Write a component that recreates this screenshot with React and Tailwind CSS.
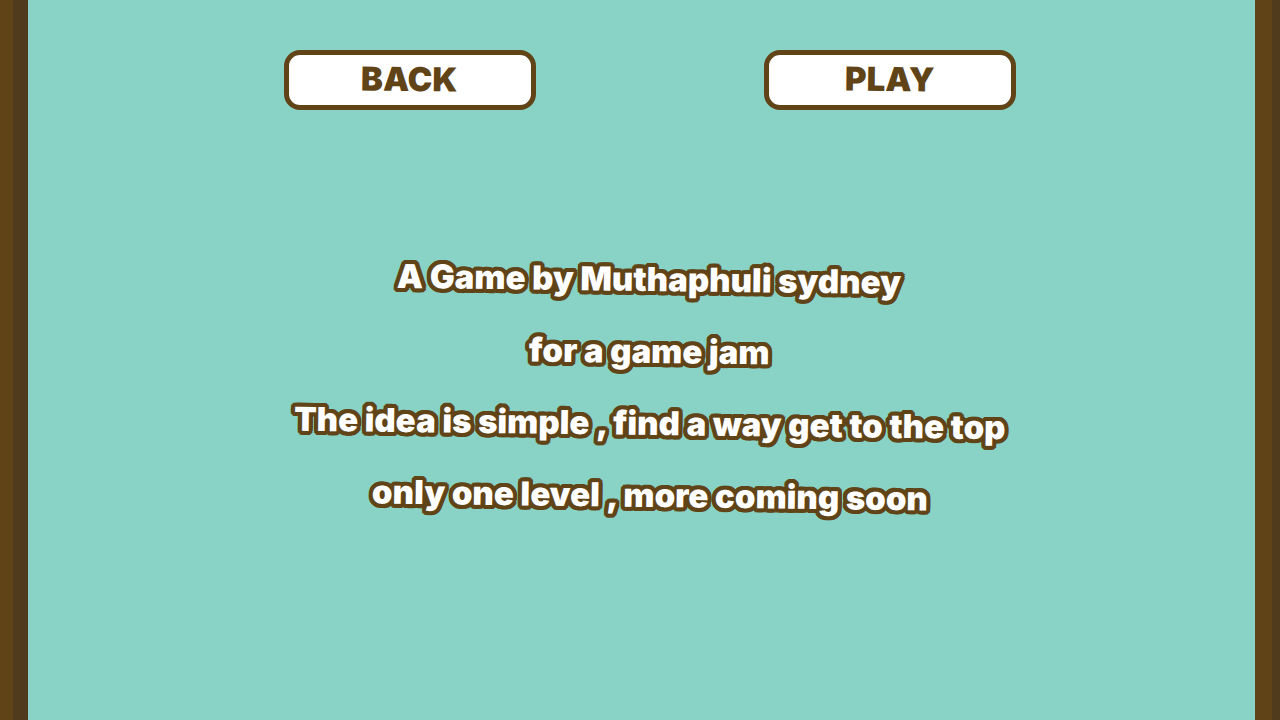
const lines = [
  'A Game by Muthaphuli sydney',
  'for a game jam',
  'The idea is simple , find a way get to the top',
  'only one level , more coming soon',
];

const outline =
  '[text-shadow:4px_0_#604417,4px_2px_#604417,3px_3px_#604417,2px_4px_#604417,0_4px_#604417,-2px_4px_#604417,-3px_3px_#604417,-4px_2px_#604417,-4px_0_#604417,-4px_-2px_#604417,-3px_-3px_#604417,-2px_-4px_#604417,0_-4px_#604417,2px_-4px_#604417,3px_-3px_#604417,4px_-2px_#604417]';

function MenuButton({ children }) {
  return (
    <button
      type="button"
      className="flex h-15 w-63 items-center justify-center rounded-2xl border-[5px] border-[#604417] bg-white pb-0.5 text-[33px] leading-9 text-[#604417]"
    >
      <span className="rotate-[0.7deg]">{children}</span>
    </button>
  );
}

export default function App() {
  return (
    <div className="flex min-h-screen bg-[#88d3c5] font-['Inter',sans-serif] font-black">
      <div className="w-[13px] shrink-0 bg-[#604417]" />
      <div className="w-[15px] shrink-0 bg-[#503c1c]" />
      <main className="flex flex-1 flex-col items-center pt-[50px] pl-4">
        <nav className="flex gap-57">
          <MenuButton>BACK</MenuButton>
          <MenuButton>PLAY</MenuButton>
        </nav>
        <div className="mt-[133px] flex flex-col items-center text-[33px] leading-[72px] whitespace-nowrap text-white">
          {lines.map((line) => (
            <p key={line} className={`rotate-[0.7deg] ${outline}`}>
              {line}
            </p>
          ))}
        </div>
      </main>
      <div className="w-[17px] shrink-0 bg-[#604417]" />
      <div className="w-2 shrink-0 bg-[#503c1c]" />
    </div>
  );
}
